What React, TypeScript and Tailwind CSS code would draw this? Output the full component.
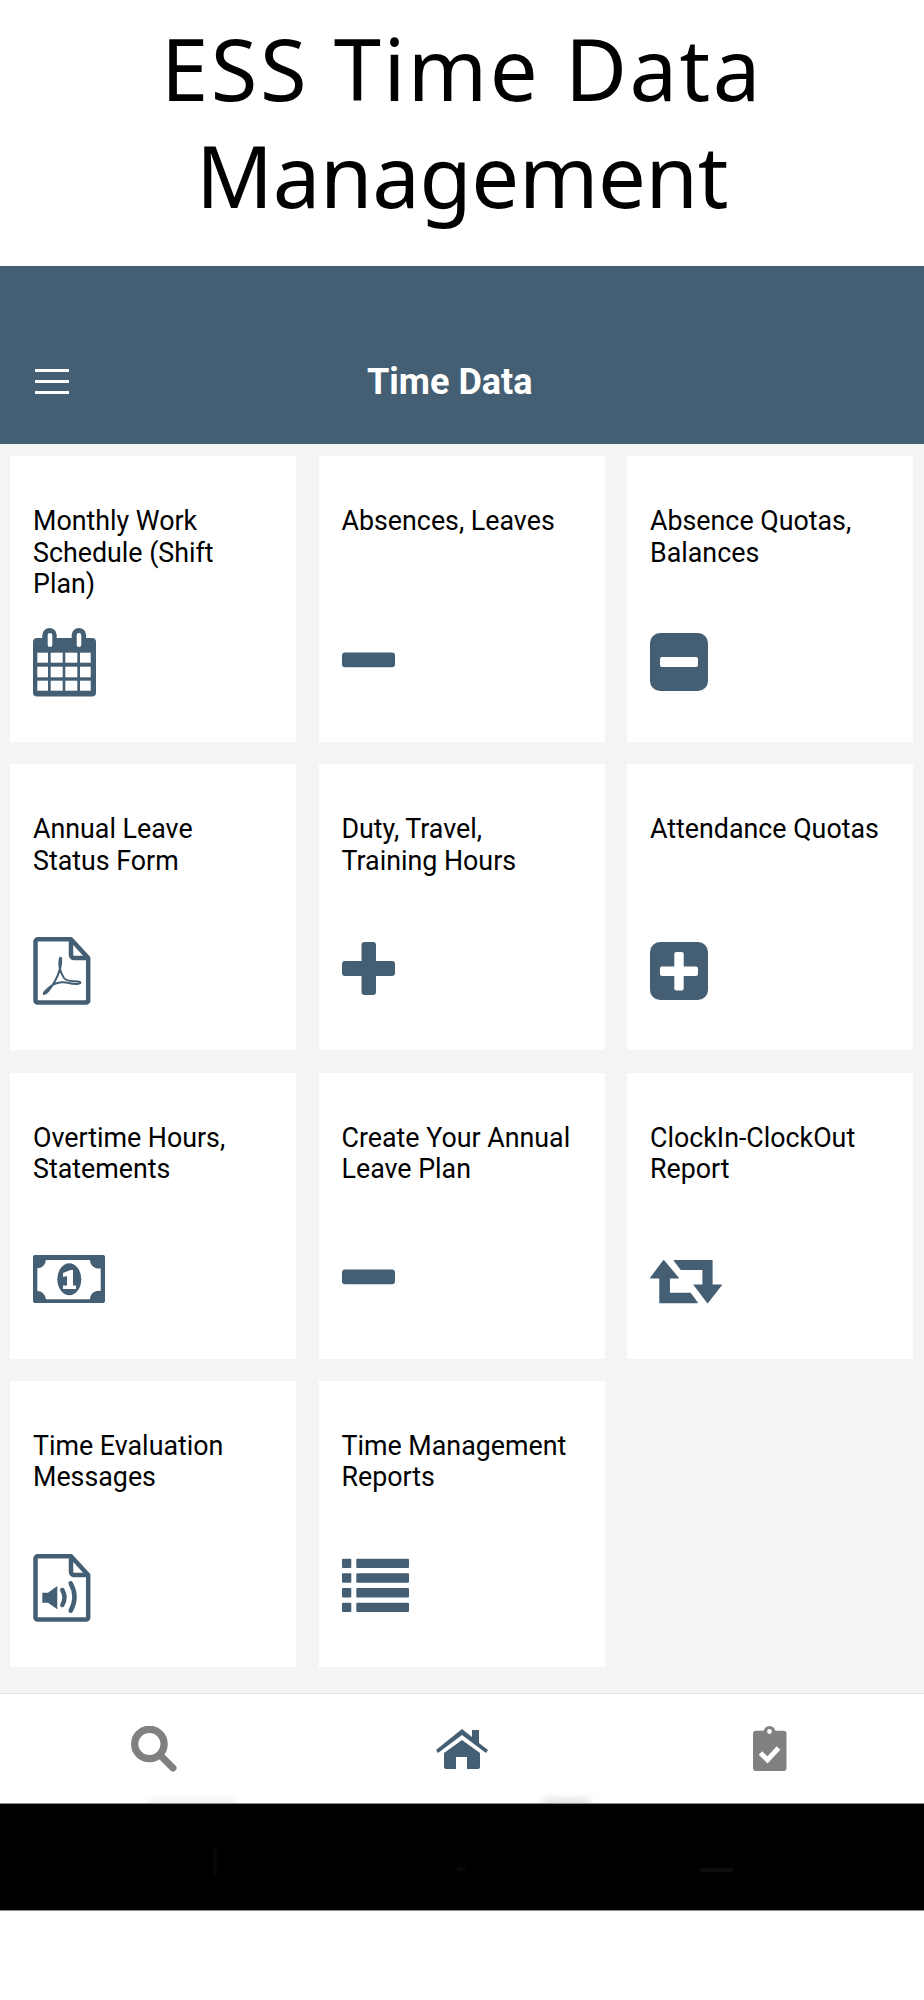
import React from 'react'

const SLATE = '#445f74'

// All tile icons share one 80x72 box so each glyph keeps its own offset in the tile
const IconBox = ({ children }: { children: React.ReactNode }) => (
  <svg viewBox="0 0 80 72" className="block w-[80px] h-[72px]" fill={SLATE}>
    {children}
  </svg>
)

const FileOutline = () => (
  <g fill="none" stroke={SLATE} strokeWidth={4.5} strokeLinejoin="round">
    <path d="M5 5.2H38L55.2 24V66.5a2 2 0 0 1-2 2H4.5a2 2 0 0 1-2-2V7.5a2.3 2.3 0 0 1 2.5-2.3Z" />
    <path d="M38 5.2V21a3 3 0 0 0 3 3H55.2" />
  </g>
)

const CalendarIcon = () => {
  const xs = [
    [4.3, 10.7],
    [17.7, 12],
    [32.3, 12],
    [47, 10.7],
  ]
  const ys = [
    [26.7, 10],
    [40.7, 10.6],
    [54.7, 10],
  ]
  return (
    <IconBox>
      <rect x={0} y={12} width={63} height={58.5} rx={4} />
      <rect x={9.3} y={2} width={14.4} height={24} rx={7.2} />
      <rect x={38.7} y={2} width={14.4} height={24} rx={7.2} />
      <rect x={14.7} y={7} width={4.6} height={14} rx={2.3} fill="#fff" />
      <rect x={43.7} y={7} width={4.6} height={14} rx={2.3} fill="#fff" />
      {ys.map(([y, h]) =>
        xs.map(([x, w]) => <rect key={`${x}-${y}`} x={x} y={y} width={w} height={h} fill="#fff" />),
      )}
    </IconBox>
  )
}

const MinusIcon = () => (
  <IconBox>
    <rect x={0} y={26.5} width={53} height={14.7} rx={3} />
  </IconBox>
)

const MinusSquareIcon = () => (
  <IconBox>
    <rect x={0} y={7} width={58} height={58} rx={10} />
    <rect x={10} y={31} width={38} height={10} rx={2} fill="#fff" />
  </IconBox>
)

const PlusIcon = () => (
  <IconBox>
    <rect x={0} y={27} width={53} height={15} rx={3} />
    <rect x={19.5} y={8} width={14.5} height={53} rx={3} />
  </IconBox>
)

const PlusSquareIcon = () => (
  <IconBox>
    <rect x={0} y={8} width={58} height={58} rx={10} />
    <rect x={10} y={32.5} width={38} height={9.5} rx={2} fill="#fff" />
    <rect x={24.3} y={18} width={9.4} height={38.5} rx={2} fill="#fff" />
  </IconBox>
)

const PdfIcon = () => (
  <IconBox>
    <FileOutline />
    <path
      d="M27 24C25 32 27 38 31 44C35 49 42 46 47 48C49 50 42 51 36 49C28 47 22 49 18 52C13 56 10 59 11 60C13 60 18 54 22 47C26 40 29 30 28 24Z"
      fill="none"
      stroke={SLATE}
      strokeWidth={2}
      strokeLinejoin="round"
    />
  </IconBox>
)

const MoneyIcon = () => (
  <IconBox>
    <rect x={0} y={12} width={72} height={48} rx={2} />
    <path
      d="M12.9 17H57A8.6 8.6 0 0 0 67.7 25.3V48A8.6 8.6 0 0 0 57 56.3H12.9A8.6 8.6 0 0 0 4.3 48V25.3A8.6 8.6 0 0 0 12.9 17Z"
      fill="#fff"
    />
    <ellipse cx={36.3} cy={36.3} rx={12} ry={16} />
    <path d="M30 30L37.5 27H40V42.5H43V46H30V42.5H34V33L30 34Z" fill="#fff" />
  </IconBox>
)

const RetweetIcon = () => (
  <IconBox>
    <g stroke={SLATE} strokeWidth={1.2} strokeLinejoin="round">
      <path d="M13.7 17.6L28.2 35H19.3V50.3H40.3L47.2 59.7H9.9V35H.6Z" />
      <path d="M24.4 17.6H62V42H71.4L57.6 59.7L44.2 42H53V26.3H31Z" />
    </g>
  </IconBox>
)

const AudioFileIcon = () => (
  <IconBox>
    <FileOutline />
    <path d="M9.3 41.7H15L24.3 35V58.3L15 51.7H9.3Z" />
    <path
      d="M29.3 39Q33.7 46.3 29.3 54M37.7 32.3Q45.3 46 37.7 59.7"
      fill="none"
      stroke={SLATE}
      strokeWidth={4.5}
      strokeLinecap="round"
    />
  </IconBox>
)

const ListIcon = () => (
  <IconBox>
    {[7.7, 22.3, 37, 51.7].map((y) => (
      <g key={y}>
        <rect x={0} y={y} width={9.3} height={9.4} rx={1} />
        <rect x={14.3} y={y} width={52.7} height={9.4} rx={1} />
      </g>
    ))}
  </IconBox>
)

const TILES: { title: string; icon: React.ReactNode }[] = [
  { title: 'Monthly Work Schedule (Shift Plan)', icon: <CalendarIcon /> },
  { title: 'Absences, Leaves', icon: <MinusIcon /> },
  { title: 'Absence Quotas, Balances', icon: <MinusSquareIcon /> },
  { title: 'Annual Leave Status Form', icon: <PdfIcon /> },
  { title: 'Duty, Travel, Training Hours', icon: <PlusIcon /> },
  { title: 'Attendance Quotas', icon: <PlusSquareIcon /> },
  { title: 'Overtime Hours, Statements', icon: <MoneyIcon /> },
  { title: 'Create Your Annual Leave Plan', icon: <MinusIcon /> },
  { title: 'ClockIn-ClockOut Report', icon: <RetweetIcon /> },
  { title: 'Time Evaluation Messages', icon: <AudioFileIcon /> },
  { title: 'Time Management Reports', icon: <ListIcon /> },
]

export default function App() {
  return (
    <div className="w-[924px] h-[2000px] bg-white font-['Roboto',sans-serif]">
      {/* Page heading */}
      <h1 className="h-[266px] pt-[15px] text-center text-[85px] leading-[107px] text-black font-['Noto_Sans',sans-serif]">
        <span className="tracking-[2.5px]">ESS Time Data</span>
        <br />
        <span className="tracking-[-0.4px]">Management</span>
      </h1>

      {/* App bar */}
      <header className="h-[178px] bg-[#445f74] flex items-end pb-[42px] pl-[35px]">
        <div className="w-[34px] flex flex-col gap-[8px] mb-[8px]">
          <span className="block h-[3px] bg-white" />
          <span className="block h-[3px] bg-white" />
          <span className="block h-[3px] bg-white" />
        </div>
        <div className="ml-[298px] text-[36px] leading-[40px] font-bold text-white">Time Data</div>
      </header>

      {/* Tiles */}
      <main className="h-[1249px] bg-[#f3f5f3] pt-[12px] px-[10px]">
        <div className="grid grid-cols-[286px_286px_286px] gap-x-[22.5px] gap-y-[22.33px]">
          {TILES.map((tile) => (
            <div key={tile.title} className="h-[286px] bg-white pl-[23px]">
              <div className="h-[170px] pt-[50px] pr-[28px] text-[26.8px] leading-[31.5px] text-black">
                {tile.title}
              </div>
              {tile.icon}
            </div>
          ))}
        </div>
      </main>

      {/* Bottom tab bar */}
      <nav className="relative h-[110px] bg-white border-t border-[#dfe2e0] grid grid-cols-3 items-center">
        <div className="flex justify-center">
          <svg viewBox="0 0 46 46" className="w-[46px] h-[46px]" fill="none" stroke="#808080">
            <circle cx={18.4} cy={18} r={14.7} strokeWidth={7.3} />
            <path d="M31 31L42 42" strokeWidth={7} strokeLinecap="round" />
          </svg>
        </div>
        <div className="flex justify-center">
          <svg viewBox="0 0 52 40" className="w-[52px] h-[40px]" fill={SLATE}>
            <path d="M26 0L36 8V1H43V14L52 21L50 24L26 6L2 24L0 21Z" />
            <path d="M26 11L44 24V38a2 2 0 0 1-2 2H31V28H20V40H10a2 2 0 0 1-2-2V24Z" />
          </svg>
        </div>
        <div className="flex justify-center">
          <svg viewBox="0 0 34 45" className="w-[34px] h-[45px]" fill="#808080">
            <circle cx={16.5} cy={6} r={6} />
            <rect x={0} y={4.7} width={33.5} height={40.3} rx={3} />
            <circle cx={16.5} cy={5.5} r={2.4} fill="#fff" />
            <path d="M7.5 27L14.5 34L25.5 22" fill="none" stroke="#fff" strokeWidth={5} />
          </svg>
        </div>
        {/* soft shadows bleeding in above the system bar */}
        <span className="absolute bottom-[-4px] left-[150px] w-[85px] h-[6px] rounded-full bg-[#e2e2e2] blur-[4px]" />
        <span className="absolute bottom-[-4px] left-[542px] w-[48px] h-[7px] rounded-full bg-[#d4d4d4] blur-[4px]" />
      </nav>

      {/* System bar, its buttons barely show */}
      <div className="relative h-[108px] bg-black border-y border-[#8a8a8a]">
        <span className="absolute top-[44px] left-[214px] w-[3px] h-[28px] bg-[#070707]" />
        <span className="absolute top-[63px] left-[456px] w-[10px] h-[5px] rounded-b-full bg-[#080808]" />
        <span className="absolute top-[64px] left-[700px] w-[33px] h-[4px] bg-[#0c0c0c]" />
      </div>
    </div>
  )
}
